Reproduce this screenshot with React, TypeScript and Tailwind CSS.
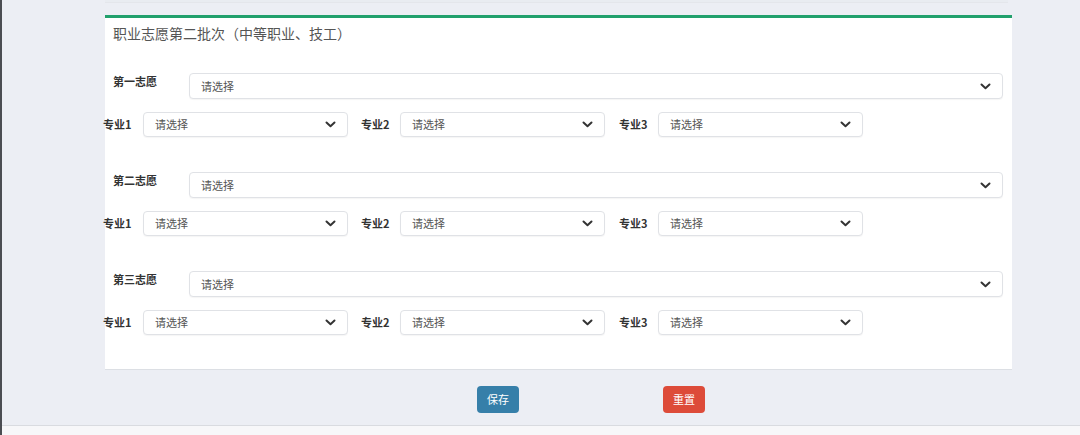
import React from 'react';

const font = { fontFamily: '"Noto Sans CJK SC", "Noto Sans", sans-serif' };

function Chevron() {
  return (
    <svg width="11" height="7" viewBox="0 0 11 7" className="shrink-0">
      <polyline points="1.5,1.5 5.5,5.2 9.5,1.5" fill="none" stroke="#333" strokeWidth="2" strokeLinecap="round" strokeLinejoin="round" />
    </svg>
  );
}

function Select({ className }: { className: string }) {
  return (
    <div
      className={`flex items-center justify-between rounded-[4px] border border-[#e0e2e6] bg-white pl-[11px] pr-[11px] shadow-[0_1px_1px_rgba(0,0,0,0.04)] ${className}`}
    >
      <span className="text-[11px] text-[#555]">请选择</span>
      <Chevron />
    </div>
  );
}

const groups = ['第一志愿', '第二志愿', '第三志愿'];
const majors = ['专业1', '专业2', '专业3'];

export default function App() {
  return (
    <div className="flex h-[435px] w-[1080px] flex-col border-l-2 border-[#4b4d52] bg-[#eceef4]" style={font}>
      <div className="h-[425px] pl-[103px]">
        <div className="h-[3px] w-[903px] border-b border-[#e4e6eb] bg-[#e9ecf1]" />
        <div className="mt-[12px] w-[907px] border-t-[3px] border-b border-[#21a06c] border-b-[#dcdfe4] bg-white pb-[34px]">
          <div className="pl-[8px] pt-[6px] text-[14px] leading-[18px] text-[#555]">职业志愿第二批次（中等职业、技工）</div>
          <div className="mt-[31px] flex flex-col gap-[35px]">
            {groups.map((g) => (
              <div key={g} className="flex flex-col gap-[13px]">
                <div className="flex items-start pl-[8px] pr-[9px]">
                  <div className="w-[76px] text-[11px] font-bold leading-4 text-[#333]">{g}</div>
                  <Select className="h-[26px] flex-1" />
                </div>
                <div className="-ml-[2px] flex items-center">
                  {majors.map((m, i) => (
                    <div key={m} className={`flex items-center ${i === 0 ? 'w-[258px]' : 'w-[258px]'}`}>
                      <div className={`${i === 0 ? 'w-[40px]' : 'w-[39px]'} text-[11px] font-bold text-[#333]`}>{m}</div>
                      <Select className="h-[25px] w-[205px]" />
                    </div>
                  ))}
                </div>
              </div>
            ))}
          </div>
        </div>
        <div className="mt-[16px] flex pl-[372px]">
          <button className="h-[27px] w-[42px] rounded-[4px] bg-[#367fa9] text-[11px] text-white">保存</button>
          <button className="ml-[144px] h-[27px] w-[42px] rounded-[4px] bg-[#dd4b39] text-[11px] text-white">重置</button>
        </div>
      </div>
      <div className="flex-1 border-t border-[#d9dbe0] bg-[#f7f7f9]" />
    </div>
  );
}
